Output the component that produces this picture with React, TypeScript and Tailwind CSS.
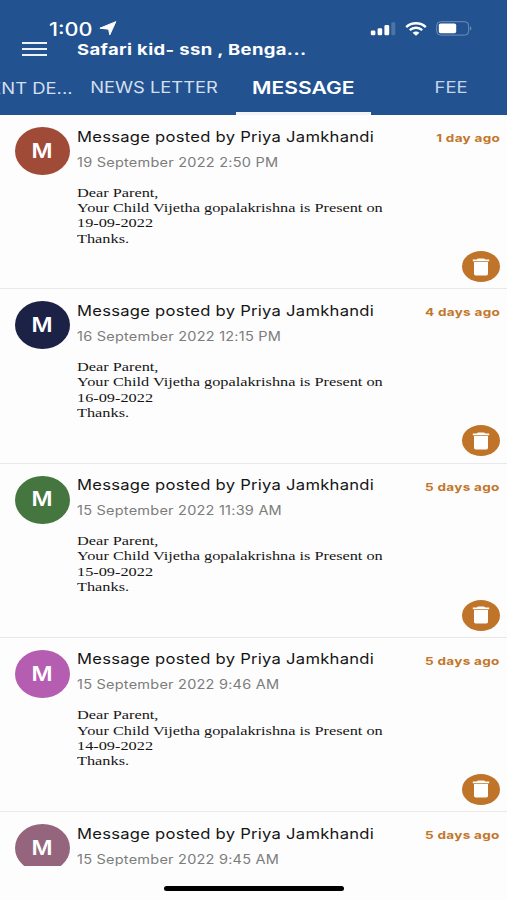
interface Message {
  date: string;
  day: string;
  age: string;
  color: string;
}

const messages: Message[] = [
  { date: "19 September 2022 2:50 PM", day: "19-09-2022", age: "1 day ago", color: "bg-[#a04a38]" },
  { date: "16 September 2022 12:15 PM", day: "16-09-2022", age: "4 days ago", color: "bg-[#1b2246]" },
  { date: "15 September 2022 11:39 AM", day: "15-09-2022", age: "5 days ago", color: "bg-[#457640]" },
  { date: "15 September 2022 9:46 AM", day: "14-09-2022", age: "5 days ago", color: "bg-[#b55db0]" },
];

function StatusIcons() {
  return (
    <div className="flex items-center">
      {/* Signal */}
      <svg width="26" height="15" viewBox="0 0 26 15" fill="#fff">
        <rect x="0.8" y="9.4" width="4.6" height="4.9" rx="1.4" />
        <rect x="7.6" y="7.2" width="4.6" height="7.1" rx="1.4" />
        <rect x="14.4" y="4" width="4.8" height="10.3" rx="1.4" />
        <rect x="21.3" y="1.2" width="4" height="13.1" rx="1.4" opacity="0.2" />
      </svg>
      {/* Wifi */}
      <svg className="ml-[9px]" width="22" height="14" viewBox="0 0 22 14" fill="none" stroke="#fff">
        <path d="M1.2 5.1 C6.6 0 15.4 0 20.8 5.1" strokeWidth="2.5" />
        <path d="M4.8 8.2 C8.2 5 13.8 5 17.2 8.2" strokeWidth="2.4" />
        <path d="M7.6 10.7 C9.6 9 12.4 9 14.4 10.7 L11 13.8 Z" fill="#fff" stroke="none" />
      </svg>
      {/* Battery */}
      <svg className="ml-[9px]" width="37" height="15" viewBox="0 0 37 15" fill="none">
        <rect x="0.7" y="0.7" width="32" height="13.4" rx="4" stroke="#fff" strokeOpacity="0.35" />
        <rect x="2.8" y="2.5" width="17.4" height="9.8" rx="1.8" fill="#fff" />
        <path d="M34.3 5.2 q2 2.2 0 4.4z" fill="#fff" fillOpacity="0.5" />
      </svg>
    </div>
  );
}

function Avatar({ color }: { color: string }) {
  return (
    <div className={`flex h-12 w-[55px] shrink-0 items-center justify-center rounded-[50%] pt-px ${color}`}>
      <span className="scale-x-[1.17] text-[19.5px] font-semibold text-white">M</span>
    </div>
  );
}

function MessageTitle({ date }: { date: string }) {
  return (
    <>
      <p className="mt-[0.6px] h-[18px] origin-left scale-x-[1.137] text-[14.6px] leading-[18px] tracking-[0.23px] text-[#151515]">
        Message posted by Priya Jamkhandi
      </p>
      <p className="mt-2 h-[18px] origin-left scale-x-[1.17] text-[12.4px] leading-[18px] tracking-[0.2px] text-[#7c7c7c]">{date}</p>
    </>
  );
}

function MessageAge({ age }: { age: string }) {
  return (
    <p className="mt-[3px] origin-right scale-x-[1.25] text-[10.8px] leading-[18px] font-bold tracking-[0.25px] text-[#c2772c]">{age}</p>
  );
}

function MessageRow({ date, day, age, color }: Message) {
  return (
    <div className="flex h-[174.2px] shrink-0 border-b border-[#e9e9e9] pt-3 pr-[7px] pl-[14.5px]">
      <Avatar color={color} />

      {/* Text */}
      <div className="ml-[7.5px] flex flex-1 flex-col items-start whitespace-nowrap">
        <MessageTitle date={date} />
        <div className="mt-[13px] origin-left scale-x-[1.217] font-['Liberation_Serif',serif] text-[13.4px] leading-[15.3px] text-[#151515]">
          <p>Dear Parent,</p>
          <p>Your Child Vijetha gopalakrishna is Present on</p>
          <p>{day}</p>
          <p>Thanks.</p>
        </div>
      </div>

      {/* Age and delete */}
      <div className="flex w-[38px] shrink-0 flex-col items-end whitespace-nowrap">
        <MessageAge age={age} />
        <button className="mt-[103px] flex h-[31px] w-[38px] items-center justify-center rounded-[50%] bg-[#c0742a]">
          <svg width="18" height="18" viewBox="0 0 18 18" fill="#fff">
            <path d="M0.8 1.5 H4.5 L6 0.6 H12 L13.5 1.5 H17.2 V3.3 H0.8 Z" />
            <path d="M2 4 H16 V15.8 Q16 17.5 14.3 17.5 H3.7 Q2 17.5 2 15.8 Z" />
          </svg>
        </button>
      </div>
    </div>
  );
}

function App() {
  return (
    <div className="flex h-[900px] w-[507px] flex-col overflow-hidden bg-[#fdfdfd] font-[Inter,sans-serif]">
      {/* Header */}
      <header className="flex h-[115.2px] shrink-0 flex-col overflow-hidden bg-[#22528f] text-white">
        <div className="mt-[19px] flex h-[19px] shrink-0 items-center justify-between pr-[34px] pl-[49px]">
          <div className="flex items-center">
            <span className="mt-px w-[44px] origin-left scale-x-[1.2] text-[18px] leading-[19px] font-medium">1:00</span>
            <svg className="ml-[6px]" width="18" height="15" viewBox="0 0 18 15" fill="#fff">
              <path d="M16.8 0.7 L10.8 13.8 L9.6 8.2 L0.9 7.2 Z" stroke="#fff" strokeWidth="1" strokeLinejoin="round" />
            </svg>
          </div>
          <StatusIcons />
        </div>

        <div className="flex h-[22px] shrink-0 items-center pl-[22px]">
          <div className="mb-px flex w-[25px] flex-col gap-1">
            <div className="h-[2px] bg-[#eef3fb]" />
            <div className="h-[2px] bg-[#eef3fb]" />
            <div className="h-[2px] bg-[#eef3fb]" />
          </div>
          <h1 className="mt-[2px] ml-[30px] origin-left scale-x-[1.23] text-[15px] leading-[22px] font-bold tracking-[0.3px] whitespace-nowrap">
            Safari kid- ssn , Benga...
          </h1>
        </div>

        {/* Tabs */}
        <nav className="flex flex-1 whitespace-nowrap">
          <div className="flex w-[72px] shrink-0 justify-end pt-[18px]">
            <span className="origin-right scale-x-[1.15] text-[16px] leading-[20px] text-[#d3dff0]">ENT DE...</span>
          </div>
          <div className="flex w-[165px] shrink-0 justify-center pt-[18px]">
            <span className="scale-x-[1.16] text-[15.8px] leading-[20px] text-[#d3dff0]">NEWS LETTER</span>
          </div>
          <div className="-ml-px flex w-[135px] shrink-0 justify-center border-b-3 border-[#f3f3f8] pt-[18px]">
            <span className="scale-x-[1.24] text-[17px] leading-[20px] font-semibold">MESSAGE</span>
          </div>
          <div className="flex w-[160px] shrink-0 justify-center pt-[18px]">
            <span className="scale-x-[1.17] text-[15.8px] leading-[20px] text-[#c3d5ea]">FEE</span>
          </div>
        </nav>
      </header>

      {/* Message list */}
      <main className="flex shrink-0 flex-col">
        {messages.map((message) => (
          <MessageRow key={message.day} {...message} />
        ))}
        <div className="flex h-[54.5px] overflow-hidden pt-3 pr-[7px] pl-[14.5px]">
          <Avatar color="bg-[#94657c]" />
          <div className="ml-[7.5px] flex flex-1 flex-col items-start whitespace-nowrap">
            <MessageTitle date="15 September 2022 9:45 AM" />
          </div>
          <div className="flex w-[38px] shrink-0 flex-col items-end whitespace-nowrap">
            <MessageAge age="5 days ago" />
          </div>
        </div>
      </main>

      {/* Home indicator */}
      <div className="flex flex-1 justify-center pt-[19.5px]">
        <div className="h-[5px] w-[180px] rounded-full bg-black" />
      </div>
    </div>
  );
}

export default App;
